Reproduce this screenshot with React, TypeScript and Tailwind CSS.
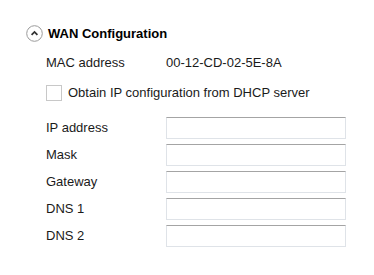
import React from "react";

const fields = ["IP address", "Mask", "Gateway", "DNS 1", "DNS 2"];

function ChevronCircle() {
  return (
    <svg width="17" height="17" viewBox="0 0 17 17" className="shrink-0">
      <circle cx="8.5" cy="8.5" r="7.8" fill="white" stroke="#9a9a9a" strokeWidth="1" />
      <path d="M5.6 9.8 L8.5 6.9 L11.4 9.8" fill="none" stroke="#333" strokeWidth="1.8" />
    </svg>
  );
}

export default function App() {
  return (
    <div
      className="w-[374px] h-[275px] bg-white text-[13px] text-[#1a1a1a] pt-[25px]"
      style={{ fontFamily: '"Liberation Sans", Arial, sans-serif' }}
    >
      <div className="flex items-center gap-[5px] pl-[26px] h-[17px]">
        <ChevronCircle />
        <span className="font-bold text-[13px] text-black">WAN Configuration</span>
      </div>
      <div className="flex items-center pl-[46px] mt-[12px] h-[18px]">
        <span className="w-[120px]">MAC address</span>
        <span>00-12-CD-02-5E-8A</span>
      </div>
      <div className="flex items-center pl-[46px] mt-[12px] h-[18px]">
        <span className="w-[16px] h-[16px] border border-[#c8c8c8] bg-white shrink-0" />
        <span className="ml-[6px]">Obtain IP configuration from DHCP server</span>
      </div>
      <div className="flex flex-col gap-[5px] mt-[15px]">
        {fields.map((f) => (
          <div key={f} className="flex items-center pl-[46px] h-[22px]">
            <span className="w-[120px]">{f}</span>
            <div className="w-[180px] h-[22px] border border-[#dfe3e8] border-t-[#a4a4a4] bg-white" />
          </div>
        ))}
      </div>
    </div>
  );
}
